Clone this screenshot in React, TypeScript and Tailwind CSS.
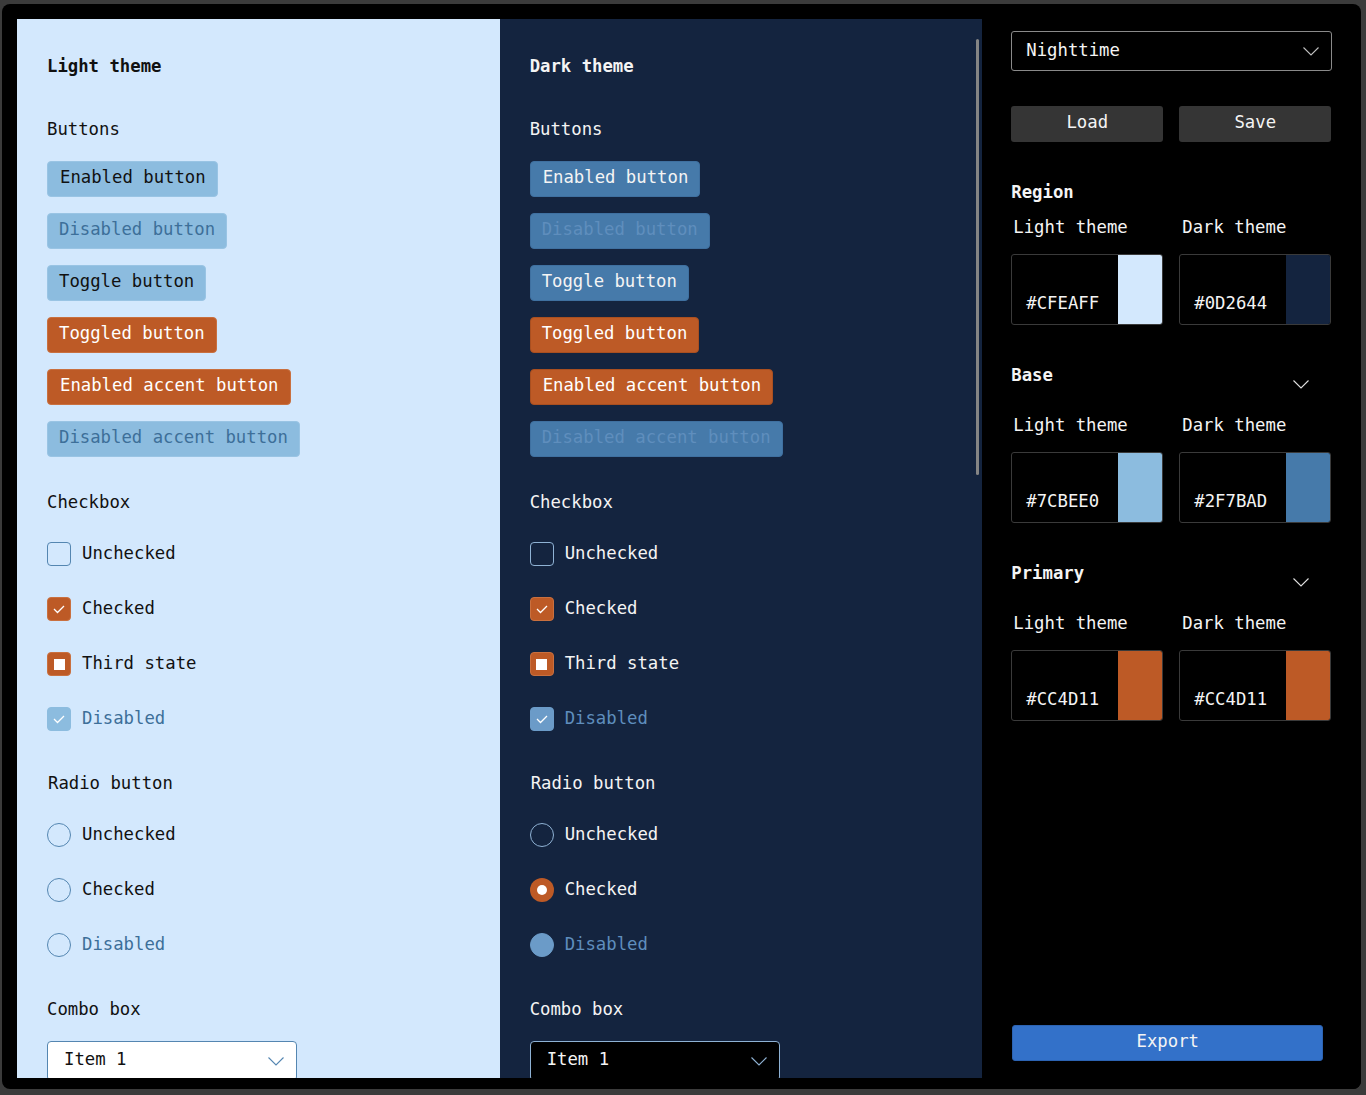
import React from "react";

type Theme = "light" | "dark";

const Chevron = ({ color = "#4a7fad", className = "" }: { color?: string; className?: string }) => (
  <svg width="16" height="9" viewBox="0 0 16 9" className={className}>
    <polyline points="0.5,0.5 8,8 15.5,0.5" fill="none" stroke={color} strokeWidth="1.1" />
  </svg>
);

const Check = () => (
  <svg width="24" height="24" viewBox="0 0 24 24" className="absolute -inset-[1px]">
    <polyline points="7,12 10.5,15.5 17,9" fill="none" stroke="#fff" strokeWidth="1.3" />
  </svg>
);

const palette = {
  light: {
    bg: "bg-[#d3e8fd]",
    text: "text-[#111111]",
    btn: "bg-[#8cbcdf] border-[#99c4e4]",
    btnText: "text-[#111111]",
    disabledText: "text-[#3d6f99]",
    accent: "bg-[#bd5a26] border-[#c9703f]",
    boxBorder: "border-[#5486b1]",
    disabledBox: "bg-[#8cbcdf] border-[#8cbcdf]",
    radioDisabled: "border-[#5486b1]",
    combo: "bg-white border-[#5486b1] text-[#111111]",
    chevron: "#5486b1",
  },
  dark: {
    bg: "bg-[#14243f]",
    text: "text-[#f4f4f4]",
    btn: "bg-[#467aaa] border-[#3f70a0]",
    btnText: "text-[#f4f4f4]",
    disabledText: "text-[#5f8ebd]",
    accent: "bg-[#bd5a26] border-[#a94f20]",
    boxBorder: "border-[#8fb2d4]",
    disabledBox: "bg-[#6b9bc8] border-[#6b9bc8]",
    radioDisabled: "bg-[#6b9bc8] border-[#6b9bc8]",
    combo: "bg-black border-[#8fb2d4] text-[#f4f4f4]",
    chevron: "#8fb2d4",
  },
};

const Panel = ({ theme }: { theme: Theme }) => {
  const p = palette[theme];
  const btn = "h-[36px] px-[11px] pb-[3px] rounded-[4px] border self-start flex items-center";
  return (
    <div className={`relative w-[483px] h-[1059px] overflow-hidden pl-[30px] pt-[35px] flex flex-col ${p.bg} ${p.text}`}>
      <div className="h-[24px] leading-[24px] font-bold">{theme === "light" ? "Light theme" : "Dark theme"}</div>
      <div className="h-[24px] leading-[24px] mt-[39px]">Buttons</div>
      <div className="flex flex-col gap-[16px] mt-[20px]">
        <div className={`${btn} ${p.btn} ${p.btnText} pl-[12px]`}>Enabled button</div>
        <div className={`${btn} ${p.btn} ${p.disabledText}`}>Disabled button</div>
        <div className={`${btn} ${p.btn} ${p.btnText}`}>Toggle button</div>
        <div className={`${btn} ${p.accent} text-white`}>Toggled button</div>
        <div className={`${btn} ${p.accent} text-white pl-[12px]`}>Enabled accent button</div>
        <div className={`${btn} ${p.btn} ${p.disabledText}`}>Disabled accent button</div>
      </div>
      <div className="h-[24px] leading-[24px] mt-[33px]">Checkbox</div>
      <div className="flex flex-col gap-[31px] mt-[28px]">
        <div className="h-[24px] flex items-center gap-[11px]">
          <div className={`w-[24px] h-[24px] rounded-[4px] border-[1.5px] ${p.boxBorder}`} />
          <span>Unchecked</span>
        </div>
        <div className="h-[24px] flex items-center gap-[11px]">
          <div className="relative w-[24px] h-[24px] rounded-[4px] bg-[#bd5a26] border border-[#c9703f]">
            <Check />
          </div>
          <span>Checked</span>
        </div>
        <div className="h-[24px] flex items-center gap-[11px]">
          <div className="w-[24px] h-[24px] rounded-[4px] bg-[#bd5a26] border border-[#c9703f] flex items-center justify-center">
            <div className="w-[11px] h-[11px] bg-white" />
          </div>
          <span>Third state</span>
        </div>
        <div className="h-[24px] flex items-center gap-[11px]">
          <div className={`relative w-[24px] h-[24px] rounded-[4px] border ${p.disabledBox}`}>
            <Check />
          </div>
          <span className={p.disabledText}>Disabled</span>
        </div>
      </div>
      <div className="h-[24px] leading-[24px] mt-[40px] pl-[1px]">Radio button</div>
      <div className="flex flex-col gap-[31px] mt-[28px]">
        <div className="h-[24px] flex items-center gap-[11px]">
          <div className={`w-[24px] h-[24px] rounded-full border-[1.5px] ${p.boxBorder}`} />
          <span>Unchecked</span>
        </div>
        <div className="h-[24px] flex items-center gap-[11px]">
          {theme === "light" ? (
            <div className={`w-[24px] h-[24px] rounded-full border-[1.5px] ${p.boxBorder}`} />
          ) : (
            <div className="w-[24px] h-[24px] rounded-full bg-[#bd5a26] flex items-center justify-center">
              <div className="w-[10px] h-[10px] rounded-full bg-white" />
            </div>
          )}
          <span>Checked</span>
        </div>
        <div className="h-[24px] flex items-center gap-[11px]">
          <div className={`w-[24px] h-[24px] rounded-full border-[1.5px] ${p.radioDisabled}`} />
          <span className={p.disabledText}>Disabled</span>
        </div>
      </div>
      <div className="h-[24px] leading-[24px] mt-[40px]">Combo box</div>
      <div className={`mt-[20px] w-[250px] h-[40px] shrink-0 rounded-[4px] border flex items-start justify-between pl-[16px] pr-[12px] pt-[5px] ${p.combo}`}>
        <span className="leading-[24px]">Item 1</span>
        <Chevron color={p.chevron} className="mt-[10px]" />
      </div>
      {theme === "dark" && (
        <div className="absolute right-[3px] top-[20px] w-[3px] h-[436px] rounded-full bg-[#858585]" />
      )}
    </div>
  );
};

const ColorBox = ({ hex, swatch }: { hex: string; swatch: string }) => (
  <div className="w-[152px] h-[71px] rounded-[3px] border border-[#3a3a3a] flex overflow-hidden">
    <div className="flex-1 flex items-end pl-[14px] pb-[9px] leading-[24px]">{hex}</div>
    <div className={`w-[44px] h-full ${swatch}`} />
  </div>
);

const Group = ({
  title,
  chevron,
  first,
  light,
  dark,
}: {
  title: string;
  chevron?: boolean;
  first?: boolean;
  light: [string, string];
  dark: [string, string];
}) => (
  <div className="flex flex-col mt-[38px]">
    <div className="w-[321px] h-[24px] flex justify-between pr-[23px]">
      <span className="font-bold leading-[24px]">{title}</span>
      {chevron && <Chevron color="#e0e0e0" className="mt-[17px]" />}
    </div>
    <div className={`flex gap-[16px] ${first ? "mt-[11px]" : "mt-[26px]"}`}>
      <span className="w-[152px] pl-[2px] leading-[24px]">Light theme</span>
      <span className="w-[152px] pl-[3px] leading-[24px]">Dark theme</span>
    </div>
    <div className="flex gap-[16px] mt-[15px]">
      <ColorBox hex={light[0]} swatch={light[1]} />
      <ColorBox hex={dark[0]} swatch={dark[1]} />
    </div>
  </div>
);

const Sidebar = () => (
  <div className="w-[379px] h-[1070px] pl-[29px] pt-[12px] flex flex-col text-[#f4f4f4] bg-black">
    <div className="w-[321px] h-[40px] rounded-[3px] border border-[#8a8a8a] flex items-center justify-between pl-[14px] pr-[12px] pb-[2px]">
      <span className="leading-[24px]">Nighttime</span>
      <Chevron color="#bdbdbd" className="mt-[2px]" />
    </div>
    <div className="flex gap-[16px] mt-[35px]">
      <div className="w-[152px] h-[36px] pb-[2px] rounded-[3px] bg-[#353535] flex items-center justify-center">Load</div>
      <div className="w-[152px] h-[36px] pb-[2px] rounded-[3px] bg-[#353535] flex items-center justify-center">Save</div>
    </div>
    <Group title="Region" first light={["#CFEAFF", "bg-[#d3e8fd]"]} dark={["#0D2644", "bg-[#14243f]"]} />
    <Group title="Base" chevron light={["#7CBEE0", "bg-[#8cbcdf]"]} dark={["#2F7BAD", "bg-[#467aaa]"]} />
    <Group title="Primary" chevron light={["#CC4D11", "bg-[#bd5a26]"]} dark={["#CC4D11", "bg-[#bd5a26]"]} />
    <div className="flex-1" />
    <div className="ml-[1px] mb-[28px] w-[311px] h-[36px] pb-[3px] rounded-[3px] bg-[#3371c9] border border-[#2c63b2] flex items-center justify-center">
      Export
    </div>
  </div>
);

export default function App() {
  return (
    <div className="w-[1366px] h-[1095px] bg-[#3b3b3b] pt-[4px] pl-[2px] font-['DejaVu_Sans_Mono',monospace] text-[17.3px]">
      <div className="w-[1359px] h-[1085px] bg-black rounded-[8px] overflow-hidden flex items-start pt-[15px] pl-[15px]">
        <Panel theme="light" />
        <Panel theme="dark" />
        <Sidebar />
      </div>
    </div>
  );
}
